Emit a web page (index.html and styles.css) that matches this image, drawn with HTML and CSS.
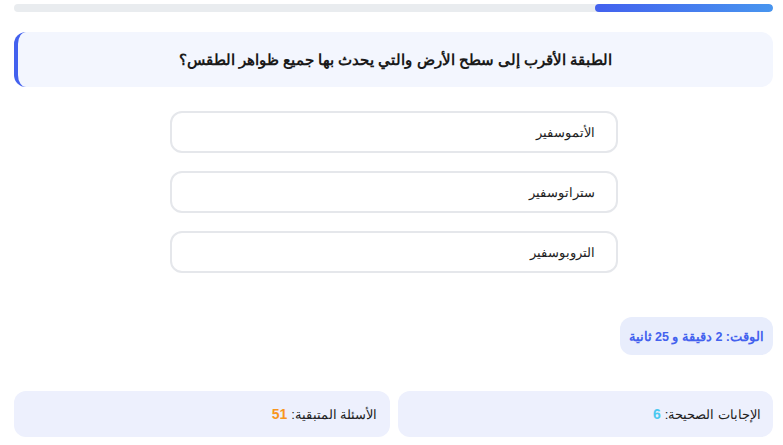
FILE: index.html
```html
<!DOCTYPE html>
<html lang="ar" dir="rtl">
<head>
<meta charset="utf-8">
<link rel="stylesheet" href="styles.css">
</head>
<body>
<div class="quiz">
  <div class="progress"><div class="progress-fill" style="width:23.5%"></div></div>
  <div class="question">الطبقة الأقرب إلى سطح الأرض والتي يحدث بها جميع ظواهر الطقس؟</div>
  <div class="options">
    <div class="option">الأتموسفير</div>
    <div class="option">ستراتوسفير</div>
    <div class="option">التروبوسفير</div>
  </div>
  <div class="timer-row"><div class="timer">الوقت: 2 دقيقة و 25 ثانية</div></div>
  <div class="stats">
    <div class="stat">الإجابات الصحيحة: <b class="correct">6</b></div>
    <div class="stat">الأسئلة المتبقية: <b class="left">51</b></div>
  </div>
</div>
</body>
</html>
```
FILE: styles.css
```css
html, body { margin: 0; padding: 0; background: #fff; }
body { font-family: "Liberation Sans", Arial, sans-serif; color: #222; }
.quiz { padding: 4px 10px 0 14px; }
.progress { height: 8px; background: #e9ecef; border-radius: 4px; overflow: hidden; display: flex; }
.progress-fill { height: 100%; border-radius: 4px; background: linear-gradient(to right, #4361ee, #4895ef); }
.question {
  margin-top: 20px; height: 55px; display: flex; align-items: center; justify-content: center;
  background: #f3f6fe; border-left: 4px solid #4361ee; border-radius: 12px;
  font-weight: bold; font-size: 15px; color: #1a1a1a;
}
.options { display: flex; flex-direction: column; align-items: center; gap: 18px; margin-top: 24px; }
.option {
  width: 402px; height: 38px; border: 2px solid #e5e7eb; border-radius: 12px;
  display: flex; align-items: center; padding: 0 21px; box-sizing: content-box;
  font-size: 12.5px; color: #222;
}
.timer-row { display: flex; margin-top: 44px; }
.timer {
  background: #e8edfc; border-radius: 12px; padding: 0 9px; height: 38px;
  display: flex; align-items: center; font-weight: bold; font-size: 12.5px; color: #4361ee;
}
.stats { display: flex; gap: 8px; margin-top: 36px; }
.stat {
  flex: 1; height: 46px; display: flex; align-items: center; gap: 4px; padding: 0 12px;
  background: #edf0fd; border-radius: 12px; font-size: 13px; color: #222;
}
.correct { color: #4cc9f0; font-size: 14px; }
.left { color: #f8961e; font-size: 14px; }
```
